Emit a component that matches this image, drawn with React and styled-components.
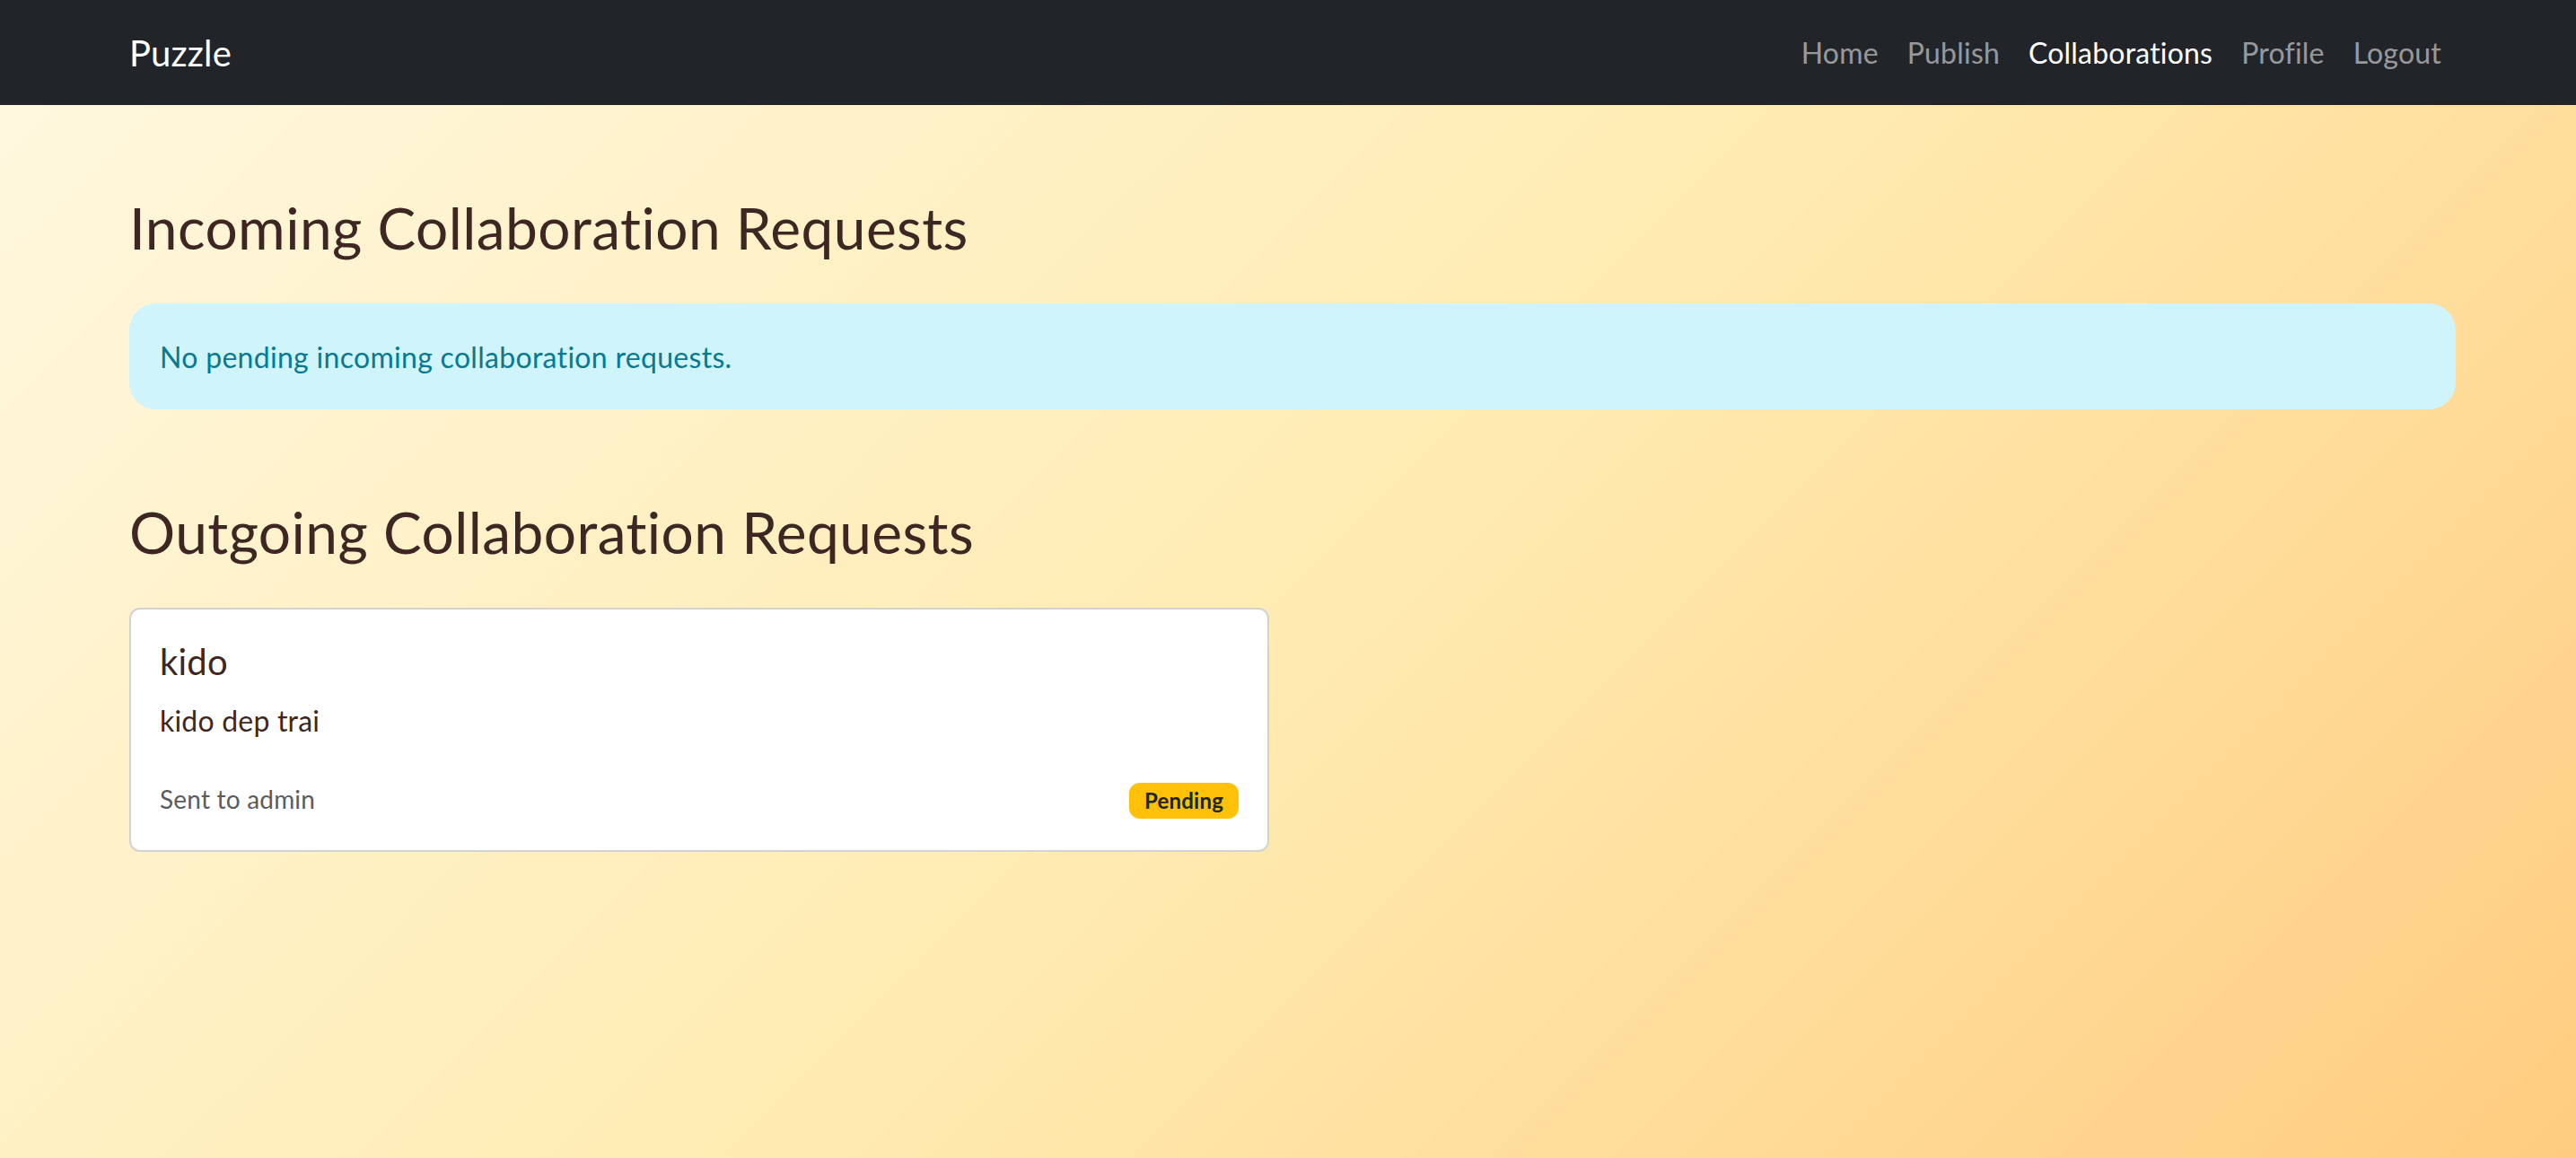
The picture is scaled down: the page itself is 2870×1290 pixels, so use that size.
import React from "react";
import styled, { createGlobalStyle } from "styled-components";

const GlobalStyle = createGlobalStyle`
  html, body {
    margin: 0;
    padding: 0;
  }
  body {
    min-height: 100vh;
    font-family: "Segoe UI", Lato, "Noto Sans", sans-serif;
    letter-spacing: 0.2px;
    color: #3e2723;
    background: linear-gradient(135deg, #fff8e1 0%, #ffecb3 50%, #ffcc80 100%);
    background-attachment: fixed;
  }
  * { box-sizing: border-box; }
`;

const Shell = styled.div`
  padding-left: 10px;
`;

const Container = styled.div`
  width: 2592px;
  margin: 0 auto;
`;

const NavBar = styled.nav`
  background: #212529;
  height: 117px;
  margin-left: -10px;
  padding-left: 10px;
`;

const NavInner = styled(Container)`
  height: 100%;
  display: flex;
  align-items: center;
  justify-content: space-between;
`;

const Brand = styled.a`
  font-size: 40px;
  line-height: 60px;
  color: #fff;
  text-decoration: none;
`;

const NavList = styled.ul`
  display: flex;
  list-style: none;
  margin: 0;
  padding: 0;
`;

const NavLink = styled.a`
  display: block;
  padding: 0 16px;
  font-size: 32px;
  line-height: 48px;
  text-decoration: none;
  color: ${(p) => (p.$active ? "#fff" : "rgba(255, 255, 255, 0.55)")};
`;

const Main = styled(Container)`
  padding-top: 99px;
`;

const Heading = styled.h2`
  font-size: 64px;
  line-height: 76.8px;
  font-weight: 400;
  letter-spacing: 0.42px;
  margin: ${(p) => (p.$spaced ? "99px" : "0")} 0 45px;
  color: #3e2723;
`;

const Alert = styled.div`
  background: #cff4fc;
  border: 2px solid #cff4fc;
  border-radius: 30px;
  padding: 34px 32px 32px;
  font-size: 32px;
  line-height: 48px;
  letter-spacing: 0.3px;
  color: #087990;
`;

const CardGrid = styled.div`
  display: grid;
  grid-template-columns: 1270px 1fr;
`;

const Card = styled.div`
  background: #fff;
  border: 2px solid rgba(0, 0, 0, 0.175);
  border-radius: 12px;
  padding: 34px 32px 34px;
`;

const CardTitle = styled.h5`
  margin: 0 0 18px;
  font-size: 40px;
  line-height: 48px;
  font-weight: 400;
  color: #3e2723;
`;

const CardText = styled.p`
  margin: 0 0 44px;
  font-size: 32px;
  line-height: 48px;
`;

const CardFooter = styled.div`
  display: flex;
  align-items: center;
  justify-content: space-between;
  height: 42px;
`;

const Muted = styled.small`
  font-size: 28px;
  line-height: 42px;
  color: #595c5f;
  margin-top: -4px;
`;

const Badge = styled.span`
  display: inline-flex;
  align-items: center;
  height: 40px;
  padding: 0 17px;
  border-radius: 12px;
  font-size: 24px;
  font-weight: 700;
  background: ${(p) => (p.$tone === "warning" ? "#ffc107" : "#6c757d")};
  color: ${(p) => (p.$tone === "warning" ? "#212529" : "#fff")};
`;

const links = [
  { label: "Home" },
  { label: "Publish" },
  { label: "Collaborations", active: true },
  { label: "Profile" },
  { label: "Logout" },
];

const outgoing = [
  { id: 1, title: "kido", text: "kido dep trai", to: "admin", status: "Pending" },
];

export default function App() {
  return (
    <>
      <GlobalStyle />
      <Shell>
        <NavBar>
          <NavInner>
            <Brand href="#">Puzzle</Brand>
            <NavList>
              {links.map((l) => (
                <li key={l.label}>
                  <NavLink href="#" $active={l.active}>
                    {l.label}
                  </NavLink>
                </li>
              ))}
            </NavList>
          </NavInner>
        </NavBar>

        <Main>
          <Heading>Incoming Collaboration Requests</Heading>
          <Alert>No pending incoming collaboration requests.</Alert>

          <Heading $spaced>Outgoing Collaboration Requests</Heading>
          <CardGrid>
            {outgoing.map((r) => (
              <Card key={r.id}>
                <CardTitle>{r.title}</CardTitle>
                <CardText>{r.text}</CardText>
                <CardFooter>
                  <Muted>Sent to {r.to}</Muted>
                  <Badge $tone="warning">{r.status}</Badge>
                </CardFooter>
              </Card>
            ))}
          </CardGrid>
        </Main>
      </Shell>
    </>
  );
}
